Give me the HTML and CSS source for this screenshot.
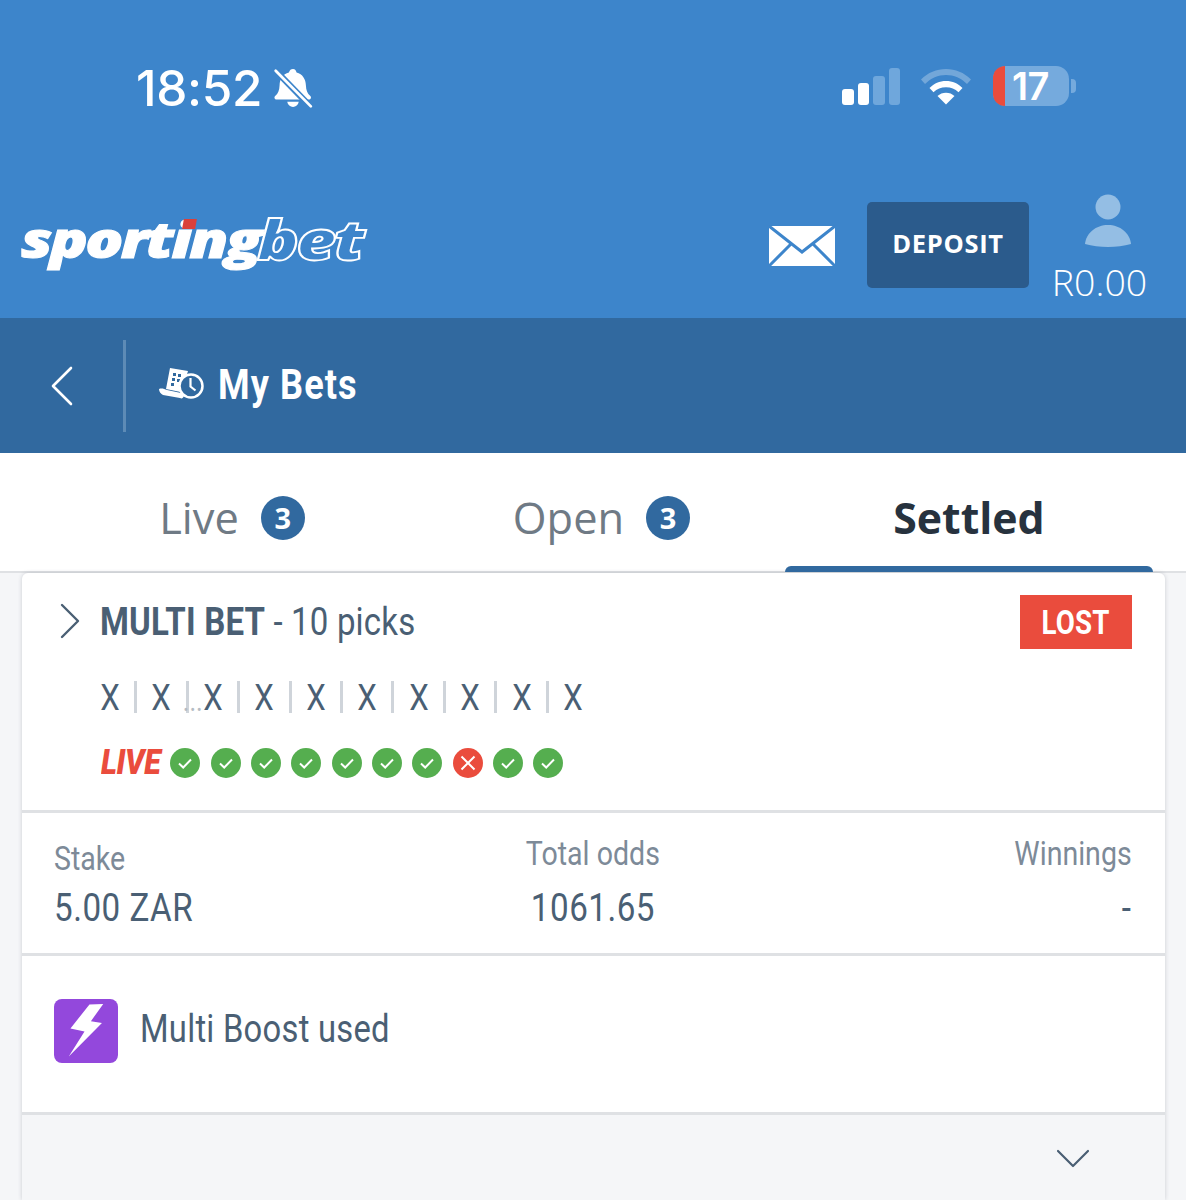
FILE: index.html
```html
<!DOCTYPE html>
<html lang="en">
<head>
<meta charset="utf-8">
<title>My Bets</title>
<link rel="stylesheet" href="styles.css">
</head>
<body>
<div class="page">
  <header class="top">
    <div class="status">
      <div class="status-left">
        <span class="time">18:52</span>
        <svg class="bell" viewBox="0 0 40 40" width="42" height="42"><path d="M20 2c2 0 3 1.500 3.400 3.300 5.800 1.500 8.600 6.200 8.900 12.200.2 4.500 1.200 7.300 4.200 10.200 1.300 1.400.6 3.300-1.500 3.300H4.500c-2.100 0-2.800-1.900-1.500-3.300 3-2.900 4-5.700 4.200-10.200.3-6 3.100-10.700 8.900-12.200C16.900 3 18 2 20 2z" fill="#fff"/><path d="M14.500 33h11c-.6 3-2.800 5-5.500 5s-4.900-2-5.500-5z" fill="#fff"/><path d="M3 3l34 35" stroke="#3d85cb" stroke-width="6" fill="none"/><path d="M3.500 3.500l33.500 34" stroke="#fff" stroke-width="2.600" stroke-linecap="round" fill="none"/></svg>
      </div>
      <div class="status-right">
        <div class="signal"><i class="bar b1"></i><i class="bar b2"></i><i class="bar b3"></i><i class="bar b4"></i></div>
        <svg class="wifi" viewBox="0 0 52 38" width="52" height="38"><path d="M1 12.500C8 5.500 16.500 2 26 2s18 3.500 25 10.500l-4 4.500C41 11 34 8 26 8S11 11 5 17z" fill="#fff" fill-opacity=".28"/><path d="M9.500 21C14 16.500 19.500 14 26 14s12 2.500 16.500 7l-4 4.200C35 22 31 20.200 26 20.200S17 22 13.500 25.200z" fill="#fff"/><path d="M17.500 29c2.300-2.100 5.200-3.300 8.500-3.300s6.200 1.200 8.500 3.300L26 37.500z" fill="#fff"/></svg>
        <div class="battery"><span class="battery-low"></span><span class="battery-num">17</span></div>
        <span class="battery-cap"></span>
      </div>
    </div>
    <div class="brand-row">
      <div class="logo"><span class="logo-a">sporting</span><span class="logo-b">bet</span><i class="logo-dot"></i></div>
      <div class="actions">
        <svg class="mail" viewBox="0 0 66 42" width="66" height="42"><path d="M0 1h66v40H0z" fill="#fff"/><path d="M0 1l33 26L66 1M0 41l22-22M66 41L44 19" stroke="#3d85cb" stroke-width="3" fill="none"/></svg>
        <div class="deposit">DEPOSIT</div>
        <div class="account">
          <svg class="user" viewBox="0 0 48 56" width="48" height="56"><circle cx="24" cy="13" r="12.500" fill="#94bee4"/><path d="M1 50c1-11 11-19 23-19s22 8 23 19c-7 2-15 3-23 3S8 52 1 50z" fill="#94bee4"/></svg>
          <span class="balance">R0.00</span>
        </div>
      </div>
    </div>
  </header>

  <nav class="subbar">
    <div class="back">
      <svg viewBox="0 0 24 40" width="24" height="40"><path d="M21 2L3 20l18 18" stroke="#fff" stroke-width="2.600" stroke-linecap="round" stroke-linejoin="round" fill="none"/></svg>
    </div>
    <div class="title-wrap">
      <svg class="bets-icon" viewBox="0 0 46 34" width="46" height="34"><path d="M12 1l18 3-1.500 5C23 10.500 20.500 15 21 20c.2 2 .8 3.500 1.600 5L8 22z" fill="#fff"/><path d="M15 6h3v3h-3zM20 7h3v3h-3zM14 11h3v3h-3zM19 12h3v3h-3zM13 16h3v3h-3z" fill="#31699f"/><path d="M1 22c3-1 5 0 8 1l14 3c1 1 2 2 3 3-1 2-2 3-4 2L5 28c-2-1-4-3-4-6z" fill="#fff"/><circle cx="33" cy="19" r="11.500" fill="none" stroke="#fff" stroke-width="2.500"/><path d="M32.500 11v8.500l5 4" fill="none" stroke="#fff" stroke-width="2.200"/></svg>
      <span class="cond title">My Bets</span>
    </div>
  </nav>

  <div class="tabs">
    <div class="tab tab-live"><span>Live</span><b class="count">3</b></div>
    <div class="tab tab-open"><span>Open</span><b class="count">3</b></div>
    <div class="tab tab-settled">Settled</div>
  </div>

  <section class="card">
    <div class="card-head">
      <div class="head-row">
        <svg class="chev" viewBox="0 0 20 36" width="20" height="36"><path d="M2 2l16 16L2 34" stroke="#4a5f74" stroke-width="2.400" stroke-linecap="round" stroke-linejoin="round" fill="none"/></svg>
        <span class="cond head-title"><b>MULTI BET</b> - 10 picks</span>
        <span class="lost"><span class="cond lost-text">LOST</span></span>
      </div>
      <div class="picks">
        <span>X</span><i></i><span>X</span><i></i><span class="dotted">X</span><i></i><span>X</span><i></i><span>X</span><i></i><span>X</span><i></i><span>X</span><i></i><span>X</span><i></i><span>X</span><i></i><span>X</span>
      </div>
      <div class="results">
        <span class="live">LIVE</span>
        <svg class="res" viewBox="0 0 30 30"><circle cx="15" cy="15" r="15" fill="#55ae4f"/><path d="M9 15.500l4.200 4L21 11.500" stroke="#fff" stroke-width="2" fill="none"/></svg>
        <svg class="res" viewBox="0 0 30 30"><circle cx="15" cy="15" r="15" fill="#55ae4f"/><path d="M9 15.500l4.200 4L21 11.500" stroke="#fff" stroke-width="2" fill="none"/></svg>
        <svg class="res" viewBox="0 0 30 30"><circle cx="15" cy="15" r="15" fill="#55ae4f"/><path d="M9 15.500l4.200 4L21 11.500" stroke="#fff" stroke-width="2" fill="none"/></svg>
        <svg class="res" viewBox="0 0 30 30"><circle cx="15" cy="15" r="15" fill="#55ae4f"/><path d="M9 15.500l4.200 4L21 11.500" stroke="#fff" stroke-width="2" fill="none"/></svg>
        <svg class="res" viewBox="0 0 30 30"><circle cx="15" cy="15" r="15" fill="#55ae4f"/><path d="M9 15.500l4.200 4L21 11.500" stroke="#fff" stroke-width="2" fill="none"/></svg>
        <svg class="res" viewBox="0 0 30 30"><circle cx="15" cy="15" r="15" fill="#55ae4f"/><path d="M9 15.500l4.200 4L21 11.500" stroke="#fff" stroke-width="2" fill="none"/></svg>
        <svg class="res" viewBox="0 0 30 30"><circle cx="15" cy="15" r="15" fill="#55ae4f"/><path d="M9 15.500l4.200 4L21 11.500" stroke="#fff" stroke-width="2" fill="none"/></svg>
        <svg class="res" viewBox="0 0 30 30"><circle cx="15" cy="15" r="15" fill="#ea4c3d"/><path d="M8.500 8.500l13 13M21.500 8.500l-13 13" stroke="#fff" stroke-width="2" fill="none"/></svg>
        <svg class="res" viewBox="0 0 30 30"><circle cx="15" cy="15" r="15" fill="#55ae4f"/><path d="M9 15.500l4.200 4L21 11.500" stroke="#fff" stroke-width="2" fill="none"/></svg>
        <svg class="res" viewBox="0 0 30 30"><circle cx="15" cy="15" r="15" fill="#55ae4f"/><path d="M9 15.500l4.200 4L21 11.500" stroke="#fff" stroke-width="2" fill="none"/></svg>
      </div>
    </div>
    <div class="stats">
      <div class="stat stat-stake"><span class="cond label">Stake</span><span class="cond value">5.00 ZAR</span></div>
      <div class="stat stat-odds"><span class="cond label">Total odds</span><span class="cond value">1061.65</span></div>
      <div class="stat stat-win"><span class="cond label">Winnings</span><span class="cond value">-</span></div>
    </div>
    <div class="boost">
      <svg class="bolt" viewBox="0 0 65 65" width="64" height="64"><rect width="65" height="65" rx="8" fill="#9348dc"/><path d="M36 5.500L50 5 37.500 22.500 48.700 24.500 15 58.500 31 33 16.700 30z" fill="#fff"/></svg>
      <span class="cond boost-text">Multi Boost used</span>
    </div>
    <div class="foot">
      <svg viewBox="0 0 34 20" width="34" height="20"><path d="M2 2l15 15L32 2" stroke="#4a5f74" stroke-width="2.200" stroke-linecap="round" stroke-linejoin="round" fill="none"/></svg>
    </div>
  </section>
</div>
</body>
</html>
```
FILE: styles.css
```css
* { box-sizing: border-box; }
html, body { margin: 0; padding: 0; }
body { background: #f5f6f8; font-family: Roboto, "Liberation Sans", sans-serif; }
.page { width: 1186px; height: 1200px; overflow: hidden; display: flex; flex-direction: column; background: #f5f6f8; }

.top { height: 318px; background: #3d85cb; display: flex; flex-direction: column; flex: none; }
.status { height: 176px; display: flex; justify-content: space-between; padding: 62px 110px 0 136px; align-items: flex-start; }
.status-left { display: flex; align-items: center; gap: 10px; }
.time { font-family: Inter, sans-serif; font-size: 49.500px; font-weight: 500; line-height: 52px; color: #fff; letter-spacing: -.3px; }
.bell { display: block; }
.status-right { display: flex; align-items: center; padding-top: 4px; }
.signal { display: flex; align-items: flex-end; gap: 4px; height: 38px; width: 58px; }
.bar { display: block; width: 12px; border-radius: 3px; background: #fff; }
.b1 { height: 16px; }
.b2 { height: 22px; }
.b3 { height: 29px; background: #6fa7dc; }
.b4 { height: 37px; background: #6fa7dc; }
.wifi { display: block; margin: 0 0 0 20px; }
.battery { width: 76px; height: 40px; margin-left: 21px; border-radius: 13px; background: #75aadd; display: flex; align-items: center; }
.battery-low { width: 12px; height: 40px; background: #ea4c3d; flex: none; border-radius: 13px 0 0 13px; }
.battery-num { font-family: Inter, sans-serif; font-size: 38px; font-weight: 600; line-height: 40px; color: #fff; margin-left: 7px; letter-spacing: -.6px; }
.battery-cap { width: 5px; height: 14px; margin-left: 2px; background: #75aadd; border-radius: 0 4px 4px 0; }

.brand-row { flex: 1; display: flex; justify-content: space-between; padding: 0 39px 0 21px; }
.logo { position: relative; height: 100px; width: 346px; display: flex; font-family: "Open Sans", sans-serif; font-weight: 800; font-style: italic; font-size: 50px; line-height: 126px; letter-spacing: -2.200px; color: #fff; white-space: nowrap; }
.logo-a, .logo-b { display: block; transform: scaleX(1.26); transform-origin: left center; }
.logo-a { -webkit-text-stroke: 1px #fff; flex: 0 0 236px; }
.logo-b { color: #3d85cb; -webkit-text-stroke: 1.800px #fff; font-size: 55px; }
.logo-dot { position: absolute; left: 162px; top: 43px; width: 13px; height: 10px; background: #d9403a; transform: skewX(-10deg); }
.actions { display: flex; align-items: flex-start; }
.mail { display: block; margin-top: 49px; }
.deposit { width: 162px; height: 86px; margin: 26px 0 0 32px; padding-bottom: 4px; border-radius: 5px; background: #2b5b8c; color: #fff; font-family: "Open Sans", sans-serif; font-weight: 700; font-size: 25.500px; letter-spacing: .7px; display: flex; align-items: center; justify-content: center; }
.account { width: 95px; margin-left: 23px; display: flex; flex-direction: column; align-items: center; }
.user { display: block; margin: 18px 0 0 16px; }
.balance { font-family: "Open Sans", sans-serif; font-size: 37.500px; line-height: 46px; color: #fff; font-weight: 300; white-space: nowrap; margin-top: 9px; }

.subbar { height: 135px; background: #31699f; display: flex; align-items: center; flex: none; }
.back { width: 126px; height: 92px; border-right: 3px solid #5d8bb6; display: flex; align-items: center; padding-left: 50px; }
.back svg { display: block; }
.title-wrap { display: flex; align-items: center; gap: 14px; padding-left: 32px; margin-bottom: 4px; }
.bets-icon { display: block; }
.cond { display: inline-block; transform: scaleX(.84); transform-origin: left center; white-space: nowrap; }
.title { font-size: 43px; font-weight: 700; color: #fff; letter-spacing: 1.300px; }

.tabs { height: 120px; flex: none; background: #fff; display: grid; grid-template-columns: 402px 383px 368px 33px; border-bottom: 2px solid #dfe1e4; font-family: "Open Sans", sans-serif; font-size: 43.400px; }
.tab { display: flex; align-items: center; justify-content: center; gap: 22px; color: #6f7a85; height: 119px; padding-top: 10px; position: relative; }
.tab-live { padding-left: 62px; }
.tab-open { padding-left: 16px; }
.tab-settled { color: #27323e; font-weight: 700; font-size: 42.800px; }
.tab-settled::after { content: ""; position: absolute; left: 0; right: 0; bottom: 0; height: 6px; background: #31699f; border-radius: 6px 6px 0 0; }
.count { width: 44px; height: 44px; border-radius: 50%; background: #31699f; color: #fff; font-size: 29px; font-weight: 700; display: flex; align-items: center; justify-content: center; font-family: "Open Sans", sans-serif; }

.card { width: 1143px; margin-left: 22px; background: #fff; border-radius: 6px 6px 0 0; box-shadow: 0 0 4px rgba(60, 70, 85, .22); flex: 1; display: flex; flex-direction: column; }
.card-head { height: 240px; border-bottom: 3px solid #dfe1e4; padding: 20px 33px 0 38px; }
.head-row { display: flex; align-items: center; height: 56px; position: relative; }
.chev { display: block; flex: none; }
.head-title { font-size: 39.300px; color: #4a5f74; margin: 2px 0 0 20px; letter-spacing: .2px; }
.head-title b { font-weight: 700; }
.lost { position: absolute; right: 0; top: 2px; width: 112px; height: 54px; background: #ea4c3d; color: #fff; display: flex; align-items: center; justify-content: center; }
.lost-text { font-weight: 700; font-size: 33px; transform-origin: center; letter-spacing: .2px; }
.picks { display: flex; align-items: center; height: 40px; margin: 28px 0 0 40px; color: #4a5f74; font-size: 37px; font-weight: 400; }
.picks span { width: 20px; display: flex; justify-content: center; transform: scaleX(.84); }
.picks i { display: block; width: 3px; height: 32px; background: #cfd4da; margin: 0 14.230px; }
.dotted { position: relative; }
.dotted::before { content: "..."; position: absolute; left: -26px; bottom: 7px; font-size: 30px; line-height: 22px; color: #b4bcc4; }
.results { display: flex; align-items: center; gap: 10.350px; margin: 25px 0 0 41px; }
.live { width: 61px; margin-right: -2px; color: #ea4c3d; font-style: italic; font-weight: 900; font-size: 35px; letter-spacing: -.5px; transform: scaleX(.87); transform-origin: left center; white-space: nowrap; }
.res { display: block; width: 30px; height: 30px; flex: none; }

.stats { height: 143px; border-bottom: 3px solid #dfe1e4; display: grid; grid-template-columns: 1fr 1fr 1fr; padding: 0 33px 0 32px; }
.stat { display: flex; flex-direction: column; color: #4a5f74; }
.label { font-size: 34px; color: #7d8a98; line-height: 40px; }
.value { font-size: 39.500px; line-height: 46px; letter-spacing: .6px; }
.stat-stake { padding-top: 25px; }
.stat-stake .value { margin-top: 7px; }
.stat-odds { padding-top: 20px; align-items: center; }
.stat-odds .value { margin-top: 12px; }
.stat-odds .cond { transform-origin: center; }
.stat-win { padding-top: 20px; align-items: flex-end; }
.stat-win .cond { transform-origin: right center; }
.stat-win .value { margin-top: 12px; }

.boost { height: 159px; border-bottom: 3px solid #dfe1e4; display: flex; align-items: flex-start; padding: 43px 0 0 32px; }
.bolt { display: block; flex: none; }
.boost-text { font-size: 39px; color: #4a5f74; margin-left: 22px; line-height: 60px; letter-spacing: .3px; }

.foot { flex: 1; background: #f5f6f8; display: flex; justify-content: flex-end; padding: 34px 75px 0 0; }
.foot svg { display: block; }
```
